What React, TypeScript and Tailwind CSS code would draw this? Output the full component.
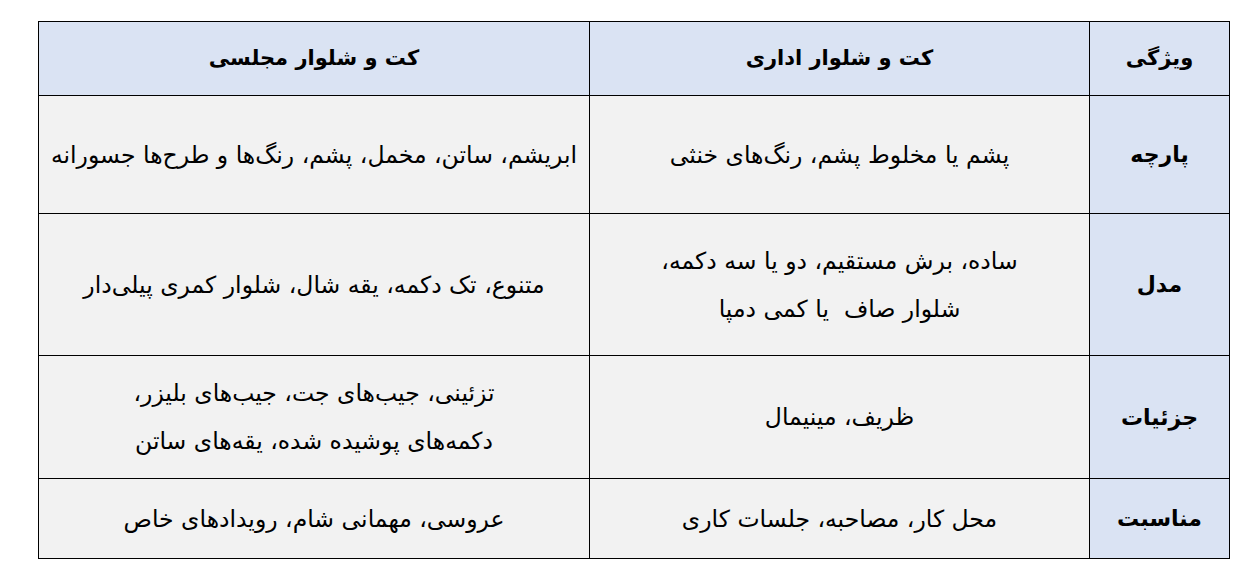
const rows = [
  {
    label: "پارچه",
    office: ["پشم یا مخلوط پشم، رنگ‌های خنثی"],
    formal: ["ابریشم، ساتن، مخمل، پشم، رنگ‌ها و طرح‌ها جسورانه"],
    h: "h-[118px]",
  },
  {
    label: "مدل",
    office: ["ساده، برش مستقیم، دو یا سه دکمه،", "شلوار صاف  یا کمی دمپا"],
    formal: ["متنوع، تک دکمه، یقه شال، شلوار کمری پیلی‌دار"],
    h: "h-[142px]",
  },
  {
    label: "جزئیات",
    office: ["ظریف، مینیمال"],
    formal: ["تزئینی، جیب‌های جت، جیب‌های بلیزر،", "دکمه‌های پوشیده شده، یقه‌های ساتن"],
    h: "h-[123px]",
  },
  {
    label: "مناسبت",
    office: ["محل کار، مصاحبه، جلسات کاری"],
    formal: ["عروسی، مهمانی شام، رویدادهای خاص"],
    h: "h-[80px]",
  },
]

export default function App() {
  return (
    <div className="w-[1257px] h-[587px] bg-white pt-[21px] pl-[38px] font-['DejaVu_Sans',sans-serif] text-black">
      <table dir="rtl" className="w-[1191px] border-collapse table-fixed">
        <colgroup>
          <col className="w-[140px]" />
          <col className="w-[500px]" />
          <col className="w-[551px]" />
        </colgroup>
        <thead>
          <tr className="h-[74px] bg-[#dae3f3]">
            <th className="border border-black text-[21px] font-bold">ویژگی</th>
            <th className="border border-black text-[21px] font-bold">کت و شلوار اداری</th>
            <th className="border border-black text-[21px] font-bold">کت و شلوار مجلسی</th>
          </tr>
        </thead>
        <tbody>
          {rows.map((r) => (
            <tr key={r.label} className={r.h}>
              <td className="border border-black bg-[#dae3f3] text-center text-[22px] font-bold">{r.label}</td>
              <td className="border border-black bg-[#f2f2f2] text-center text-[23.5px] leading-[48px] whitespace-pre">
                {r.office.map((t) => (
                  <div key={t}>{t}</div>
                ))}
              </td>
              <td className="border border-black bg-[#f2f2f2] text-center text-[23.5px] leading-[48px] whitespace-pre">
                {r.formal.map((t) => (
                  <div key={t}>{t}</div>
                ))}
              </td>
            </tr>
          ))}
        </tbody>
      </table>
    </div>
  )
}
